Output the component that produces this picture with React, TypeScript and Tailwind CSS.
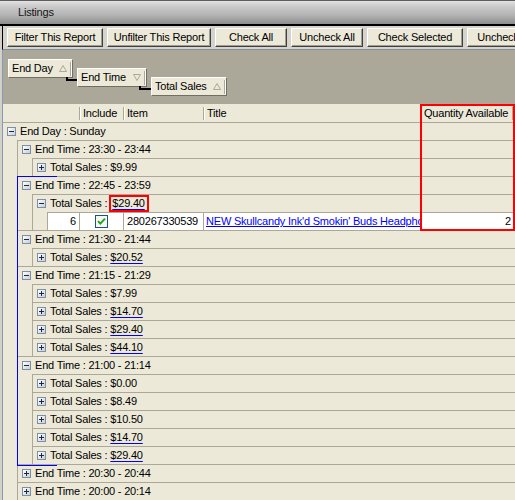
import React from 'react'

type Row = {
  label: string
  value?: string
  mark?: 'u' | 'box'
  open?: boolean
  children?: Row[]
  items?: boolean
}

const sales = (value: string, mark?: 'u' | 'box'): Row => ({ label: 'Total Sales :', value, mark })

const tree: Row = {
  label: 'End Day : Sunday',
  open: true,
  children: [
    { label: 'End Time : 23:30 - 23:44', open: true, children: [sales('$9.99')] },
    { label: 'End Time : 22:45 - 23:59', open: true, children: [{ ...sales('$29.40', 'box'), open: true, items: true }] },
    { label: 'End Time : 21:30 - 21:44', open: true, children: [sales('$20.52', 'u')] },
    {
      label: 'End Time : 21:15 - 21:29',
      open: true,
      children: [sales('$7.99'), sales('$14.70', 'u'), sales('$29.40', 'u'), sales('$44.10', 'u')],
    },
    {
      label: 'End Time : 21:00 - 21:14',
      open: true,
      children: [sales('$0.00'), sales('$8.49'), sales('$10.50'), sales('$14.70', 'u'), sales('$29.40', 'u')],
    },
    { label: 'End Time : 20:30 - 20:44' },
    { label: 'End Time : 20:00 - 20:14' },
  ],
}

const buttons = [
  { label: 'Filter This Report', w: 'w-[96px]' },
  { label: 'Unfilter This Report', w: 'w-[104px]' },
  { label: 'Check All', w: 'w-[72px]' },
  { label: 'Uncheck All', w: 'w-[72px]' },
  { label: 'Check Selected', w: 'w-[96px]' },
  { label: 'Uncheck Selected', w: 'w-[106px]' },
]

function Expander({ open }: { open?: boolean }) {
  return (
    <span className="relative block w-[9px] h-[9px] shrink-0 border border-[#7b8fa6] bg-gradient-to-br from-white to-[#c6ced8]">
      <span className="absolute left-[1px] right-[1px] top-[3px] h-px bg-[#1e2a3a]" />
      {!open && <span className="absolute top-[1px] bottom-[1px] left-[3px] w-px bg-[#1e2a3a]" />}
    </span>
  )
}

function Triangle({ down }: { down?: boolean }) {
  return (
    <svg width="8" height="7" viewBox="0 0 8 7" className="shrink-0">
      <polygon
        points={down ? '0.5,0.5 7.5,0.5 4,6.5' : '0.5,6.5 7.5,6.5 4,0.5'}
        fill="none"
        stroke="#aca899"
        strokeWidth="1"
      />
    </svg>
  )
}

function Chip({ label, down, w, mt, link }: { label: string; down?: boolean; w: string; mt: string; link?: string }) {
  return (
    <div
      className={`relative ${w} ${mt} h-[19px] shrink-0 flex items-center bg-[#ece9d8] border border-t-white border-l-white border-r-[#716f64] border-b-[#716f64] pl-[3px] pr-[1px]`}
    >
      <span className="whitespace-nowrap">{label}</span>
      <span className="ml-auto mr-[3px]">
        <Triangle down={down} />
      </span>
      <span className="h-[14px] w-px bg-[#aca899] shadow-[1px_0_0_#ffffff]" />
      {link && <span className={`absolute ${link} top-[17px] w-[12px] h-[4px] border-l-2 border-b-2 border-black`} />}
    </div>
  )
}

function HeadCell({ label, w }: { label?: string; w: string }) {
  return (
    <div className={`${w} shrink-0 flex items-center`}>
      <span className="h-[13px] w-px bg-[#aca899] shadow-[1px_0_0_#ffffff]" />
      <span className="ml-[3px] whitespace-nowrap">{label}</span>
    </div>
  )
}

function Value({ row }: { row: Row }) {
  if (row.mark === 'box') {
    return (
      <span className="ml-[2px] h-[17px] flex items-center border-2 border-[#ff0000] pl-[1px] pr-[2px]">
        <span className="underline decoration-[#0000ff] underline-offset-[2px]">{row.value}</span>
      </span>
    )
  }
  if (row.mark === 'u') {
    return (
      <span className="ml-[3px] underline decoration-[#0000ff] underline-offset-[2px] pr-[2px]">{row.value}</span>
    )
  }
  return <span className="ml-[3px]">{row.value}</span>
}

function GroupRow({ row }: { row: Row }) {
  return (
    <div className="h-[18px] flex items-center border-t border-[#aca899] pl-[4px] whitespace-nowrap">
      <Expander open={row.open} />
      <span className="ml-[4px]">{row.label}</span>
      {row.value && <Value row={row} />}
    </div>
  )
}

function DataRow() {
  return (
    <div className="h-[18px] flex border-t border-[#aca899] bg-white whitespace-nowrap">
      <div className="w-[32px] shrink-0 border-r border-[#aca899] text-right pr-[3px] leading-[17px]">6</div>
      <div className="w-[44px] shrink-0 border-r border-[#aca899] flex items-center justify-center">
        <svg width="13" height="13" viewBox="0 0 13 13">
          <rect x="0.5" y="0.5" width="12" height="12" fill="#f6f6f2" stroke="#1c5180" />
          <path d="M3 6.2 L5.3 8.6 L10 3.6" fill="none" stroke="#21a121" strokeWidth="1.9" />
        </svg>
      </div>
      <div className="w-[80px] shrink-0 border-r border-[#aca899] pl-[3px] leading-[17px]">280267330539</div>
      <div className="w-[217px] shrink-0 border-r border-[#aca899] pl-[2px] leading-[17px] overflow-hidden">
        <span className="text-[#0000ff] underline">NEW Skullcandy Ink'd Smokin' Buds Headphones</span>
      </div>
      <div className="flex-1 text-right pr-[4px] leading-[17px]">2</div>
    </div>
  )
}

function Group({ row }: { row: Row }) {
  return (
    <div>
      <GroupRow row={row} />
      {row.open && (row.children || row.items) && (
        <div className="ml-[14px] border-l border-[#aca899]">
          {row.children?.map((c, i) => <Group key={i} row={c} />)}
          {row.items && <DataRow />}
        </div>
      )}
    </div>
  )
}

export default function App() {
  return (
    <div className="w-[515px] h-[500px] overflow-hidden flex flex-col bg-[#d4d0c8] text-black font-['Liberation_Sans',Arial,sans-serif] text-[11px] tracking-[-0.2px]">
      {/* title bar */}
      <div className="h-[26px] shrink-0 border-t border-[#5e5e5e] border-b-2 border-b-black bg-[linear-gradient(to_bottom,#e2e2e2_0px,#c8c8c8_6px,#b4b4b4_14px,#8e8e8e_23px)] flex items-center pl-[18px] text-[#151515]">
        Listings
      </div>

      {/* toolbar */}
      <div className="h-[24px] shrink-0 ml-[2px] border-l border-black border-b border-b-[#7f8fa0] bg-[#d6d3cc] flex items-start gap-[4px] pt-[2px] pl-[4px] overflow-hidden">
        {buttons.map((b) => (
          <div
            key={b.label}
            className={`${b.w} h-[19px] shrink-0 flex items-center justify-center whitespace-nowrap bg-[#ece9d8] border border-t-white border-l-white border-r-[#404040] border-b-[#404040] shadow-[inset_-1px_-1px_0_#a09e93]`}
          >
            {b.label}
          </div>
        ))}
      </div>

      <div className="flex-1 ml-[2px] border-l border-[#7f9db9] bg-[#ece9d8]">
        {/* group by area */}
        <div className="h-[54px] bg-[#aca899] flex items-start gap-[4px] pl-[5px] pt-[9px]">
          <Chip label="End Day" w="w-[65px]" mt="mt-0" link="left-[57px]" />
          <Chip label="End Time" down w="w-[70px]" mt="mt-[9px]" link="left-[61px]" />
          <Chip label="Total Sales" w="w-[76px]" mt="mt-[18px]" />
        </div>

        {/* grid */}
        <div className="relative">
          <div className="h-[18px] flex items-center whitespace-nowrap">
            <div className="w-[76px] shrink-0" />
            <HeadCell label="Include" w="w-[44px]" />
            <HeadCell label="Item" w="w-[80px]" />
            <HeadCell label="Title" w="w-[217px]" />
            <HeadCell label="Quantity Available" w="w-[92px]" />
            <HeadCell w="w-[10px]" />
          </div>
          <Group row={tree} />

          <div className="absolute left-[14px] top-[72px] w-[40px] h-[290px] border-l border-t border-b border-[#0000ff]" />
          <div className="absolute left-[417px] top-0 w-[95px] h-[127px] border-2 border-[#ff0000]" />
        </div>
      </div>
    </div>
  )
}
